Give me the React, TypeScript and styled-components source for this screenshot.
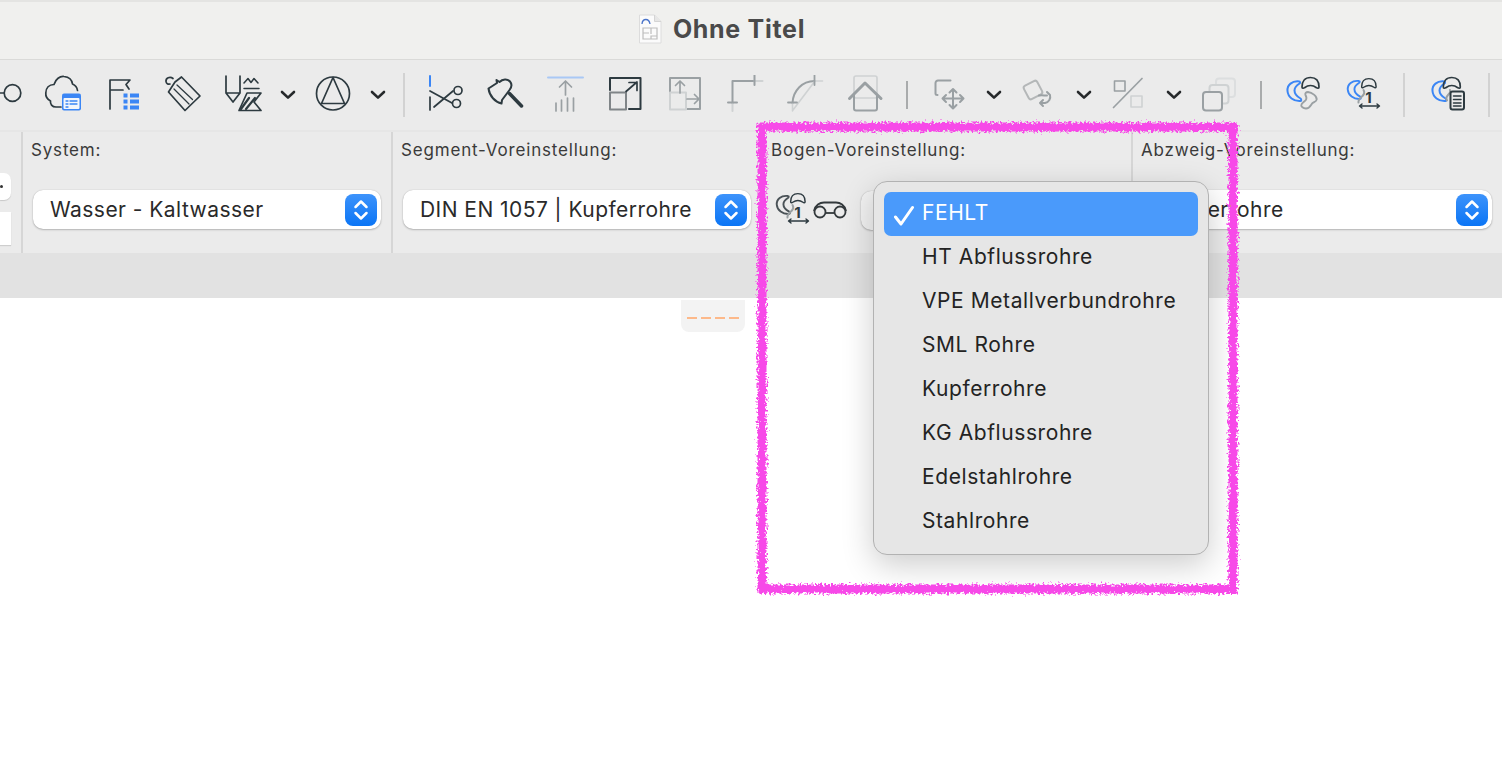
import React from 'react';
import styled, { createGlobalStyle } from 'styled-components';

const GlobalStyle = createGlobalStyle`
  html, body {
    margin: 0;
    padding: 0;
    background: #fff;
    overflow: hidden;
  }
  body {
    font-family: Inter, "Liberation Sans", sans-serif;
  }
`;

const DARK = '#2d3a40';
const GRAY = '#9aa0a3';
const LIGHT = '#cfd2d3';
const BLUE = '#3b86f5';

const Page = styled.div`
  position: relative;
  width: 1502px;
  height: 760px;
  overflow: hidden;
  background: #fff;
`;

const TitleBar = styled.header`
  box-sizing: border-box;
  height: 60px;
  padding: 0 59px 4px 0;
  border-top: 2px solid #e4e4e2;
  border-bottom: 1px solid #dadad8;
  background: #f0f0ee;
  display: flex;
  align-items: center;
  justify-content: center;
  gap: 11px;
`;

const Title = styled.h1`
  margin: 0;
  font-size: 25px;
  line-height: 30px;
  font-weight: 700;
  letter-spacing: 0.7px;
  color: #4a4a4a;
  font-family: Inter, "Liberation Sans", sans-serif;
`;

const Toolbar = styled.div`
  height: 70px;
  background: #ebebeb;
  display: flex;
  align-items: center;
  gap: 20px;
  overflow: hidden;
`;

const Tool = styled.svg`
  flex: none;
  display: block;
  fill: none;
  stroke-linecap: round;
  stroke-linejoin: round;
`;

const ChevronIcon = styled.svg`
  flex: none;
  width: 16px;
  height: 10px;
  margin: 0 -3px;
  fill: none;
`;

const ToolSep = styled.div<{ $short?: boolean; $after?: number }>`
  flex: none;
  width: 2px;
  height: ${(p) => (p.$short ? '28px' : '44px')};
  margin: 0 ${(p) => p.$after ?? (p.$short ? 1 : 0)}px 0 ${(p) => (p.$short ? 1 : 0)}px;
  background: ${(p) => (p.$short ? '#a9abac' : '#d2d2d2')};
`;

const Settings = styled.section`
  height: 121px;
  border-top: 2px solid #e6e6e6;
  background: #ebebeb;
  display: grid;
  grid-template-columns: 23px 370px 370px 370px 369px;
`;

const Cell = styled.div<{ $last?: boolean }>`
  box-sizing: border-box;
  padding: 8px 10px 0 8px;
  border-right: ${(p) => (p.$last ? 'none' : '2px solid #d6d6d6')};
  min-width: 0;
`;

const StubCell = styled.div`
  box-sizing: border-box;
  border-right: 2px solid #d6d6d6;
  padding-top: 41px;
  display: flex;
  flex-direction: column;
  align-items: flex-start;
  gap: 12px;
`;

const StubPopup = styled.div`
  width: 11px;
  height: 27px;
  background: #fff;
  border-radius: 0 7px 7px 0;
  box-shadow: 0 1px 1px rgba(0, 0, 0, 0.15);
  display: flex;
  align-items: center;
`;

const StubDot = styled.span`
  width: 3px;
  height: 3px;
  margin-bottom: 1px;
  border-radius: 50%;
  background: #333;
`;

const StubInput = styled.div`
  width: 11px;
  height: 33px;
  background: #fff;
  box-shadow: 0 1px 1px rgba(0, 0, 0, 0.12);
`;

const Label = styled.div`
  height: 20px;
  font-size: 17px;
  line-height: 20px;
  letter-spacing: 0.82px;
  color: #3a3a3a;
  white-space: nowrap;
  overflow: hidden;
`;

const ControlRow = styled.div`
  margin-top: 30px;
  margin-left: 2px;
  display: flex;
  align-items: center;
`;

const Select = styled.div<{ $muted?: boolean }>`
  box-sizing: border-box;
  flex: 1;
  min-width: 0;
  height: 39px;
  padding: 0 4px 0 17px;
  display: flex;
  align-items: center;
  justify-content: space-between;
  border-radius: 10px;
  background: ${(p) => (p.$muted ? '#f2f2f2' : '#fff')};
  box-shadow: 0 0 1px rgba(0, 0, 0, 0.25), 0 1px 2px rgba(0, 0, 0, 0.22);
  font-size: 21px;
  letter-spacing: 0.45px;
  color: #2a2a2a;
  white-space: nowrap;
`;

const Stepper = styled.span`
  flex: none;
  width: 32px;
  height: 32px;
  border-radius: 8px;
  background: linear-gradient(#3d93fb, #0b75f5);
  display: flex;
  align-items: center;
  justify-content: center;
`;

const PresetIcons = styled.div`
  flex: none;
  width: 89px;
  margin-left: -1px;
  display: flex;
  align-items: center;
`;

const StatusBar = styled.div`
  height: 45px;
  background: #e2e2e2;
`;

const Canvas = styled.main`
  padding: 2px 0 0 681px;
`;

const LineTab = styled.div`
  box-sizing: border-box;
  width: 64px;
  height: 32px;
  background: #f3f3f3;
  border-radius: 0 0 8px 8px;
  padding: 3px 6px 0;
  display: flex;
  align-items: center;
  justify-content: space-between;
`;

const Dash = styled.span`
  width: 10px;
  height: 2px;
  background: #fdb98a;
`;

const Menu = styled.ul`
  position: absolute;
  left: 873px;
  top: 181px;
  box-sizing: border-box;
  width: 336px;
  height: 374px;
  margin: 0;
  padding: 10px;
  list-style: none;
  background: #e6e6e6;
  border: 1px solid #b2b2b2;
  border-radius: 14px;
  box-shadow: 0 10px 32px rgba(0, 0, 0, 0.2);
`;

const MenuItem = styled.li<{ $selected?: boolean }>`
  position: relative;
  height: 44px;
  padding-left: 38px;
  border-radius: 7px;
  background: ${(p) => (p.$selected ? '#4a9afb' : 'transparent')};
  color: ${(p) => (p.$selected ? '#fff' : '#232323')};
  font-size: 21px;
  letter-spacing: 0.58px;
  line-height: 42px;
  white-space: nowrap;
`;

const Check = styled.svg`
  position: absolute;
  left: 9px;
  top: 13px;
  width: 22px;
  height: 21px;
  fill: none;
`;

const Scribble = styled.svg`
  position: absolute;
  left: 745px;
  top: 110px;
  width: 505px;
  height: 495px;
  pointer-events: none;
`;

const Chevron = () => (
  <ChevronIcon viewBox="0 0 16 10">
    <path d="M2 2l6 5.600L14 2" stroke="#26292b" strokeWidth="2.600" strokeLinecap="round" strokeLinejoin="round" />
  </ChevronIcon>
);

const Icon: React.FC<{ w?: number; children: React.ReactNode }> = ({ w = 40, children }) => (
  <Tool width={w} height={40} viewBox={`0 0 ${w} 40`} strokeWidth={1.7} stroke={DARK}>
    {children}
  </Tool>
);

const CRESCENT =
  'M16.500 6.500C9 5.500 4 10 4.500 16c.5 6 6 10.500 13 10 1-.2 1-1.800 0-2.500-3-1.700-6-4-6-8 0-3 2-5 5-7 .9-.7.6-2-.0-2z';
const DOME =
  'M19 12C19 6 22 2.500 27.500 2.500S36 6 36 12c0 1.500-1.500 1.500-2.500.7-2-1.500-4-2.200-6-2.200s-4 .7-6 2.200c-1 .8-2.500.8-2.500-.7z';
const BLOB =
  'M25 17c4 .5 9 4 8.700 7.500-.2 2.500-3.700 2.500-5 4.500-1.300 2-2.700 4.500-5.700 4.500-3 0-5-2-4.700-3.500.3-2 3-3 4.500-5 1.200-1.700.5-3.500-.3-5-.7-1.500.5-3 2.500-3z';

const DimensionOne: React.FC<{ accent?: string }> = ({ accent = BLUE }) => (
  <Tool width={40} height={40} viewBox="0 0 40 40" strokeWidth={1.7} stroke={DARK}>
    <g transform="translate(0.500 0) scale(0.95 0.92)">
      <path d={CRESCENT} stroke={accent} strokeWidth={2} />
    </g>
    <g transform="translate(2.500 1.500) scale(0.85 0.85)">
      <path d={DOME} />
    </g>
    <path d="M20.500 15c1.500 2.500.5 4.500-1 6-1.500 1.500-4.500 3.500-4 6.500" stroke={GRAY} strokeWidth={2} />
    <text x="25.500" y="27.500" fontFamily="Inter, sans-serif" fontSize="15" fontWeight="700" fill={DARK} stroke="none" textAnchor="middle">
      1
    </text>
    <path d="M17 31h19M19 29l-2.500 2 2.500 2M34 29l2.500 2-2.500 2" strokeWidth={1.400} />
  </Tool>
);

const StepperArrows = () => (
  <svg width="16" height="24" viewBox="0 0 16 24" fill="none">
    <path d="M2.500 9L8 3.500 13.500 9M2.500 15L8 20.500 13.500 15" stroke="#fff" strokeWidth="2.500" strokeLinecap="round" strokeLinejoin="round" />
  </svg>
);

const DocIcon = () => (
  <svg width="24" height="30" viewBox="0 0 24 30" fill="none">
    <path d="M1.500 1h15L23 7.500V29H1.500z" fill="#fbfbfb" stroke="#dcdcdc" />
    <path d="M16.500 1v6.500H23" fill="#e6e6e6" stroke="#d4d4d4" />
    <path d="M4 10c.5-6 7-6 8 0" stroke="#4a74c9" strokeWidth="1.300" />
    <path d="M5 14h14v11H5zM5 19h6M13 14v6M13 25v-3h6" stroke="#bdbdbd" strokeWidth="1.200" />
  </svg>
);

const MENU_ITEMS = [
  'FEHLT',
  'HT Abflussrohre',
  'VPE Metallverbundrohre',
  'SML Rohre',
  'Kupferrohre',
  'KG Abflussrohre',
  'Edelstahlrohre',
  'Stahlrohre',
];

const App: React.FC = () => (
  <Page>
    <GlobalStyle />
    <TitleBar>
      <DocIcon />
      <Title>Ohne Titel</Title>
    </TitleBar>

    <Toolbar>
      <Icon w={23}>
        <circle cx="12.500" cy="18" r="8.300" />
        <path d="M0 18h4" />
      </Icon>
      <Icon>
        <path d="M18 32h-5c-4 0-6-3-5.500-6C4 24 2.500 21 2.800 18 3 13 6 9.500 11 9.500 12.500 4 17 1 21 1.500c5 .5 8 3.500 8.500 7.500 2.500 1 4.500 3 5 6.500" />
        <rect x="19" y="18.500" width="19" height="17" rx="2" fill={BLUE} stroke="none" />
        <rect x="20.500" y="23" width="16" height="11" rx="1" fill="#f3f6fb" stroke="none" />
        <path d="M23 26h2M27 26h7M23 29h2M27 29h7M23 32h2" stroke={BLUE} strokeWidth={1.300} />
      </Icon>
      <Icon>
        <path d="M7 34V5h20l-4 4.500 3 4.500M7 15h13" />
        <path d="M20.500 18.500h4v4h-4zM27 18.500h9v4h-9zM20.500 24.500h4v4h-4zM27 24.500h9v4h-9zM20.500 30.500h4v4h-4zM27 30.500h9v4h-9z" fill={BLUE} stroke="none" />
      </Icon>
      <Icon>
        <path d="M12 7l6.500-5L37 21 22 35.500 5.500 17z" />
        <path d="M10 3.500C7 1 2.500 3 3 6.500c.3 2 2 3 4 2.500" />
        <path d="M14 10l15.500 14.500M11 14l15 15" strokeWidth={1.300} />
      </Icon>
      <Icon>
        <path d="M3 1v17l7 9 7-9V1M3 18h14" />
        <path d="M21 8l4-4.500 3 4 3-4 4 4.500M21 13.500h15" strokeWidth={1.500} />
        <path d="M24 18h14l-7 9 7 8.500H16z" />
        <path d="M18 34l8-11M23 34l9-11" strokeWidth={2.200} />
      </Icon>
      <Chevron />
      <Icon>
        <circle cx="20" cy="18.500" r="16.500" />
        <path d="M20 2.500L8.500 28.500h23z" />
      </Icon>
      <Chevron />
      <ToolSep />
      <Icon>
        <path d="M5 1v10" stroke={BLUE} strokeWidth={2} />
        <path d="M5 22v13" />
        <path d="M5 16l22 12M9 32l19-16" />
        <circle cx="33" cy="15.500" r="4" />
        <circle cx="31.500" cy="28.500" r="4" />
      </Icon>
      <Icon>
        <path d="M3.500 13.500L12 8l-.5-3 3 2c3-3 8-3.500 10.500-.5 2 2.500 1.500 6-.5 8.500L17 25l-.5 3.500C10 27 4.500 21 3.500 13.500z" strokeWidth={2} />
        <path d="M24.500 18.500L36.500 31" strokeWidth={3.500} />
      </Icon>
      <Icon>
        <path d="M3 2.500h35" stroke="#a9c8f5" strokeWidth={2} />
        <path d="M20.500 6v14M14.500 12l6-6 6 6M11 28v8M16.500 25v11M22.500 23v13M28.500 23v13" stroke={GRAY} />
      </Icon>
      <Icon>
        <path d="M5 15V3h30.500v31H24" strokeWidth={2} />
        <path d="M5 17.500h16v17H5z" stroke="#808588" strokeWidth={2} />
        <path d="M21 16.500L32 7M24 7.500h8v8" />
      </Icon>
      <Icon>
        <path d="M5 17V3h30v31H22" stroke={GRAY} strokeWidth={2} />
        <path d="M5 17.500h16v17H5z" stroke={LIGHT} strokeWidth={2} />
        <path d="M15 18V6M10.500 10.500L15 6l4.500 4.500M22 24h12M29.500 19.500L34 24l-4.500 4.500" stroke={GRAY} />
      </Icon>
      <Icon>
        <path d="M7.500 28V6h22" stroke={GRAY} strokeWidth={2} />
        <path d="M29.500 6h8M7.500 28v8" stroke={LIGHT} strokeWidth={2} />
        <path d="M29.500 0v10M3 27.500h9" stroke={GRAY} strokeWidth={2} />
      </Icon>
      <Icon>
        <path d="M7.500 28C8 16 17 6 29.500 6" stroke={GRAY} strokeWidth={2} />
        <path d="M29.500 6h8M7.500 28v8M8 35L30 6" stroke={LIGHT} strokeWidth={1.600} />
        <path d="M29.500 0v10M3 27.500h9" stroke={GRAY} strokeWidth={1.800} />
      </Icon>
      <Icon>
        <rect x="9" y="1" width="23" height="22" rx="2" stroke={LIGHT} />
        <path d="M9 20v13.500a2 2 0 0 0 2 2h19a2 2 0 0 0 2-2V20" stroke={GRAY} strokeWidth={2} />
        <path d="M4.500 23.500L20 8l16 15.500" stroke={GRAY} strokeWidth={3} />
      </Icon>
      <ToolSep $short />
      <Icon>
        <path d="M21.500 5.500H9a2.500 2.500 0 0 0-2.500 2.500v10.500c0 1 1 1.500 2 1.500" stroke={GRAY} strokeWidth={2} />
        <path d="M24 14v19M13.500 23.500h21M20.500 17.500L24 14l3.500 3.500M20.500 30L24 33.500l3.500-3.500M17 20l-3.500 3.500L17 27M31 20l3.500 3.500L31 27" stroke={GRAY} strokeWidth={2} />
      </Icon>
      <Chevron />
      <Icon>
        <rect x="6.500" y="7.500" width="15" height="15" rx="2.500" transform="rotate(-28 14 15)" stroke="#b4b7b8" strokeWidth={2} />
        <path d="M31 20c1 3.500-1 7-5 8h-5M24 25l-3 3 3 3M20 20.500c3-.5 5 0 8 0M28 17l3 3" stroke={GRAY} strokeWidth={2} />
      </Icon>
      <Chevron />
      <Icon>
        <rect x="5.500" y="6" width="10.500" height="10" stroke={GRAY} strokeWidth={1.600} />
        <rect x="22" y="21" width="11" height="11" stroke={LIGHT} strokeWidth={1.600} />
        <path d="M33 3.500L4.500 32.500" stroke={GRAY} />
      </Icon>
      <Chevron />
      <Icon>
        <rect x="17" y="3.500" width="19" height="18.500" rx="3" stroke="#dcdedf" strokeWidth={2} />
        <rect x="10.500" y="10" width="19" height="18.500" rx="3" fill="#ebebeb" stroke={LIGHT} strokeWidth={2} />
        <rect x="4" y="17" width="19" height="18.500" rx="3" fill="#ebebeb" stroke={GRAY} strokeWidth={2} />
      </Icon>
      <ToolSep $short />
      <Icon>
        <path d={CRESCENT} stroke={BLUE} strokeWidth={2} />
        <path d={DOME} />
        <path d={BLOB} stroke={GRAY} strokeWidth={1.900} />
      </Icon>
      <DimensionOne />
      <ToolSep $after={3} />
      <Icon>
        <path d={CRESCENT} stroke={BLUE} strokeWidth={2} />
        <g transform="translate(-3.700 0)">
          <path d={DOME} />
        </g>
        <path d="M22 15c1 2-.5 3.500-2 5s-2.500 3-1 5.500" stroke={GRAY} strokeWidth={2} />
        <rect x="22.500" y="16.500" width="13.500" height="18" rx="2" fill="#ebebeb" strokeWidth={2} />
        <path d="M25.500 21h7.500M25.500 24.500h7.500M25.500 28h7.500M25.500 31h7.500" strokeWidth={1.500} />
      </Icon>
      <ToolSep />
    </Toolbar>

    <Settings>
      <StubCell>
        <StubPopup>
          <StubDot />
        </StubPopup>
        <StubInput />
      </StubCell>
      <Cell>
        <Label>System:</Label>
        <ControlRow>
          <Select>
            Wasser - Kaltwasser
            <Stepper>
              <StepperArrows />
            </Stepper>
          </Select>
        </ControlRow>
      </Cell>
      <Cell>
        <Label>Segment-Voreinstellung:</Label>
        <ControlRow>
          <Select>
            DIN EN 1057 | Kupferrohre
            <Stepper>
              <StepperArrows />
            </Stepper>
          </Select>
        </ControlRow>
      </Cell>
      <Cell>
        <Label>Bogen-Voreinstellung:</Label>
        <ControlRow>
          <PresetIcons>
            <DimensionOne accent="#4a5257" />
            <svg width="36" height="20" viewBox="0 0 36 20" fill="none" stroke="#33393c" strokeWidth="1.800">
              <path d="M2 11C3 5 8 2.500 12 2.500h12c4 0 9 2.500 10 8.500" />
              <circle cx="8" cy="12" r="5.500" fill="#ebebeb" />
              <circle cx="28" cy="12" r="5.500" fill="#ebebeb" />
              <path d="M13.500 13h9" />
            </svg>
          </PresetIcons>
          <Select $muted />
        </ControlRow>
      </Cell>
      <Cell $last>
        <Label>Abzweig-Voreinstellung:</Label>
        <ControlRow>
          <Select>
            Kupferrohre
            <Stepper>
              <StepperArrows />
            </Stepper>
          </Select>
        </ControlRow>
      </Cell>
    </Settings>

    <StatusBar />

    <Canvas>
      <LineTab>
        <Dash />
        <Dash />
        <Dash />
        <Dash />
      </LineTab>
    </Canvas>

    <Menu>
      {MENU_ITEMS.map((item, index) => (
        <MenuItem key={item} $selected={index === 0}>
          {index === 0 && (
            <Check viewBox="0 0 22 21">
              <path d="M2.500 12l5.500 7L19.500 2.500" stroke="#fff" strokeWidth="3" strokeLinecap="round" strokeLinejoin="round" />
            </Check>
          )}
          {item}
        </MenuItem>
      ))}
    </Menu>

    <Scribble viewBox="0 0 505 495">
      <defs>
        <filter id="rough" x="-5%" y="-5%" width="110%" height="110%">
          <feTurbulence type="fractalNoise" baseFrequency="0.45" numOctaves="2" seed="4" />
          <feDisplacementMap in="SourceGraphic" scale="9" />
        </filter>
      </defs>
      <rect x="17" y="17" width="471" height="462" fill="none" stroke="#f748e8" strokeWidth="9" filter="url(#rough)" />
    </Scribble>
  </Page>
);

export default App;
